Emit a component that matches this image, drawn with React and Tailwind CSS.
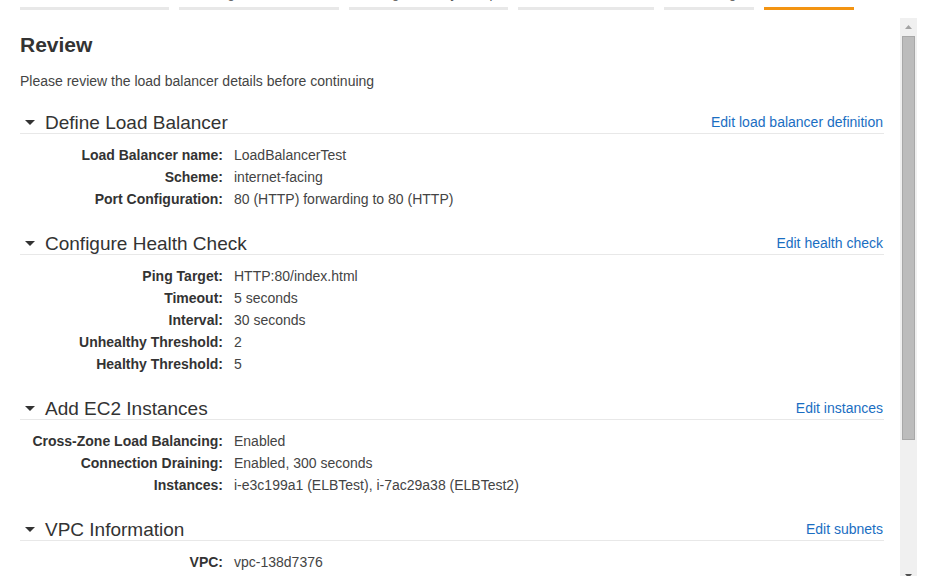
import React from "react";

const tabs = [
  { label: "1. Define Load Balancer", w: "w-[149px]", active: false },
  { label: "2. Configure Health Check", w: "w-[160px]", active: false },
  { label: "3. Assign Security Groups", w: "w-[159px]", active: false },
  { label: "4. Add EC2 Instances", w: "w-[136px]", active: false },
  { label: "5. Add Tags", w: "w-[90px]", active: false },
  { label: "6. Review", w: "w-[90px]", active: true },
];

const sections = [
  {
    title: "Define Load Balancer",
    edit: "Edit load balancer definition",
    rows: [
      ["Load Balancer name:", "LoadBalancerTest"],
      ["Scheme:", "internet-facing"],
      ["Port Configuration:", "80 (HTTP) forwarding to 80 (HTTP)"],
    ],
  },
  {
    title: "Configure Health Check",
    edit: "Edit health check",
    rows: [
      ["Ping Target:", "HTTP:80/index.html"],
      ["Timeout:", "5 seconds"],
      ["Interval:", "30 seconds"],
      ["Unhealthy Threshold:", "2"],
      ["Healthy Threshold:", "5"],
    ],
  },
  {
    title: "Add EC2 Instances",
    edit: "Edit instances",
    rows: [
      ["Cross-Zone Load Balancing:", "Enabled"],
      ["Connection Draining:", "Enabled, 300 seconds"],
      ["Instances:", "i-e3c199a1 (ELBTest), i-7ac29a38 (ELBTest2)"],
    ],
  },
  {
    title: "VPC Information",
    edit: "Edit subnets",
    rows: [["VPC:", "vpc-138d7376"]],
  },
];

function Section({ title, edit, rows }) {
  return (
    <div className="mb-[23px]">
      <div className="flex items-center h-[22px] border-b border-[#e8e8e8]">
        <svg width="10" height="6" viewBox="0 0 10 6" className="ml-[5px] mr-[10px]">
          <path d="M0 0 L10 0 L5 5 Z" fill="#333" />
        </svg>
        <h2 className="text-[19px] leading-[21px] text-[#333]">{title}</h2>
        <a className="ml-auto mr-px text-[14px] text-[#1a6ec2] cursor-pointer">{edit}</a>
      </div>
      <div className="pt-[10px]">
        {rows.map(([k, v]) => (
          <div key={k} className="flex h-[22px] items-center text-[14px]">
            <div className="w-[203px] text-right font-bold text-[#333]">{k}</div>
            <div className="pl-[11px] text-[#444]">{v}</div>
          </div>
        ))}
      </div>
    </div>
  );
}

function Scrollbar() {
  return (
    <div className="mt-2 w-[17px] h-[566px] bg-[#f0f0f0] flex flex-col items-center shrink-0">
      <div className="h-[18px] flex items-center justify-center">
        <svg width="7" height="4" viewBox="0 0 7 4">
          <path d="M0 4 L7 4 L3.5 0 Z" fill="#a3a3a3" />
        </svg>
      </div>
      <div className="w-[13px] h-[404px] bg-[#bcbcbc] border border-[#a8a8a8]"></div>
      <div className="flex-1"></div>
      <div className="h-[16px] flex items-center justify-center">
        <svg width="7" height="4" viewBox="0 0 7 4">
          <path d="M0 0 L7 0 L3.5 4 Z" fill="#505050" />
        </svg>
      </div>
    </div>
  );
}

export default function App() {
  return (
    <div className="w-[939px] h-[576px] overflow-hidden bg-white font-['Liberation_Sans',Arial,sans-serif]">
      <div className="h-[10px] overflow-hidden">
        <div className="flex gap-[10px] pl-5 -mt-[13px]">
          {tabs.map((t) => (
            <div key={t.label} className={`${t.w} shrink-0 overflow-hidden flex flex-col`}>
              <div className="w-full h-[14px] leading-[14px] text-[13px] text-[#555] whitespace-nowrap overflow-hidden text-center">
                {t.label}
              </div>
              <div className={`mt-[6px] h-[3px] w-full ${t.active ? "bg-[#f39412]" : "bg-[#e8e8e8]"}`}></div>
            </div>
          ))}
        </div>
      </div>
      <div className="flex">
        <div className="w-[900px] pl-5 pr-4 shrink-0">
          <h1 className="mt-[23px] text-[21px] leading-6 font-bold text-[#333]">Review</h1>
          <p className="mt-[16px] text-[14px] leading-[16px] text-[#444]">
            Please review the load balancer details before continuing
          </p>
          <div className="mt-[23px]">
            {sections.map((s) => (
              <Section key={s.title} {...s} />
            ))}
          </div>
        </div>
        <Scrollbar />
      </div>
    </div>
  );
}
